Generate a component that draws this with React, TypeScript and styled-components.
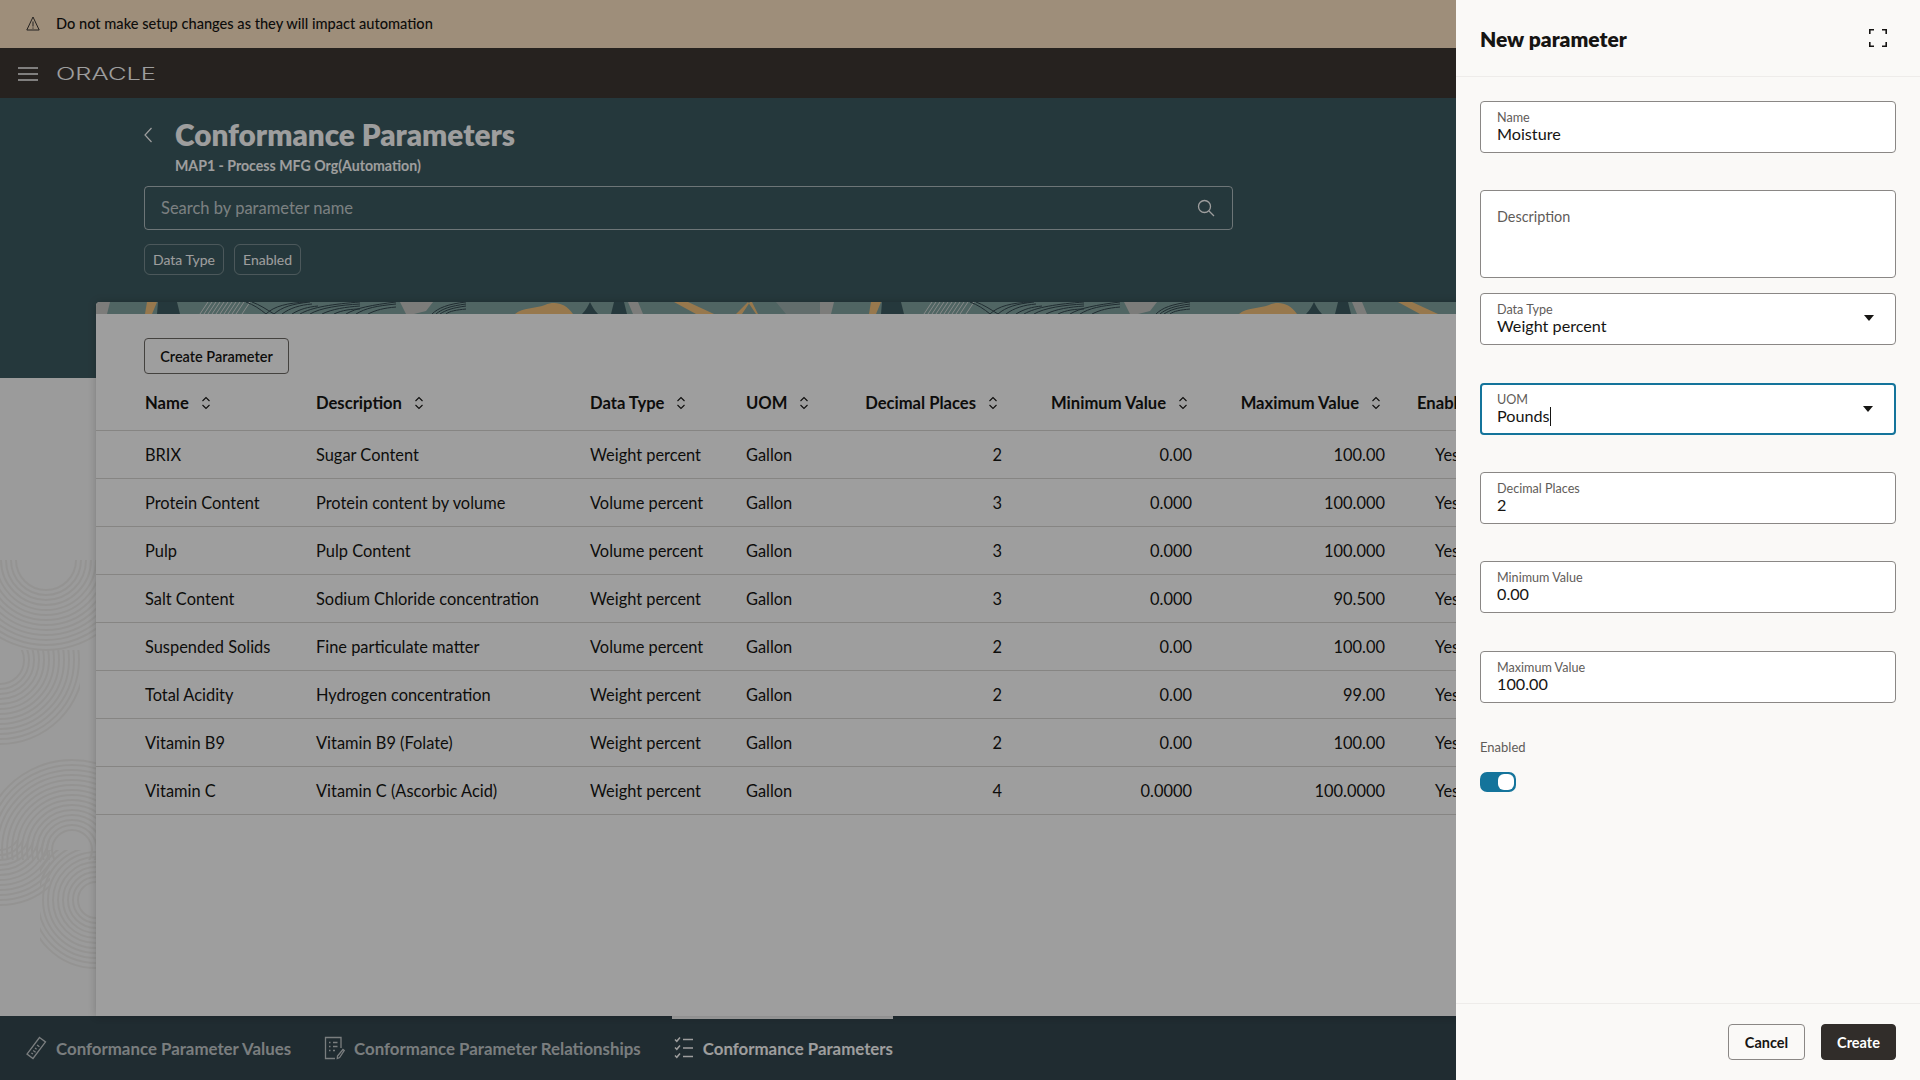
import styled, { createGlobalStyle } from "styled-components";

const GlobalStyle = createGlobalStyle`
  html, body {
    margin: 0;
    padding: 0;
    background: #fff;
  }
  body {
    font-family: "Lato", "Noto Sans", "Liberation Sans", sans-serif;
    color: #161513;
  }
`;

const Page = styled.div`
  position: relative;
  width: 1920px;
  height: 1080px;
  overflow: hidden;
  display: flex;
  flex-direction: column;
  background: #fafafa;
`;

const Banner = styled.div`
  flex: 0 0 48px;
  display: flex;
  align-items: center;
  gap: 16px;
  padding: 0 0 1px 26px;
  box-sizing: border-box;
  background: #ffe5c6;
  font-size: 14.6px;
  font-weight: 500;
  color: #161513;
`;

const NavBar = styled.div`
  box-sizing: border-box;
  flex: 0 0 50px;
  display: flex;
  align-items: center;
  gap: 18px;
  padding: 2px 0 0 18px;
  background: #3e3733;
  color: #fff;
`;

const Main = styled.div`
  position: relative;
  flex: 1;
  min-height: 0;
  display: flex;
  flex-direction: column;
  overflow: hidden;
`;

const Watermark = styled.svg`
  position: absolute;
  left: 0;
  top: 462px;
  width: 96px;
  height: 456px;
`;

const Hero = styled.div`
  flex: 0 0 280px;
  box-sizing: border-box;
  padding: 20px 0 0 144px;
  background: #3d5b61;
  color: #fff;
`;

const TitleRow = styled.div`
  display: flex;
  align-items: center;
  gap: 23px;
  height: 34px;
`;

const Title = styled.h1`
  margin: 0;
  font-size: 29.7px;
  line-height: 34px;
  font-weight: 800;
`;

const Subtitle = styled.div`
  margin: 5px 0 0 31px;
  font-size: 14.15px;
  line-height: 18px;
  font-weight: 700;
`;

const SearchBox = styled.div`
  box-sizing: border-box;
  display: flex;
  align-items: center;
  justify-content: space-between;
  width: 1089px;
  height: 44px;
  margin-top: 11px;
  padding: 0 17px 0 16px;
  border: 1px solid rgba(255, 255, 255, 0.6);
  border-radius: 4px;
  font-size: 16.5px;
  color: rgba(255, 255, 255, 0.72);
`;

const ChipRow = styled.div`
  display: flex;
  gap: 10px;
  margin-top: 14px;
`;

const Chip = styled.div`
  box-sizing: border-box;
  height: 31px;
  display: flex;
  align-items: center;
  padding: 0 8px;
  border: 1px solid rgba(255, 255, 255, 0.32);
  border-radius: 6px;
  font-size: 14px;
`;

const Card = styled.div`
  position: relative;
  flex: 1;
  min-height: 0;
  width: 1728px;
  margin: -76px 0 0 96px;
  background: #fff;
  border-radius: 4px 4px 0 0;
  box-shadow: 0 0 8px rgba(0, 0, 0, 0.2);
  overflow: hidden;
`;

const Stripe = styled.svg`
  display: block;
  width: 100%;
  height: 12px;
`;

const OutlineButton = styled.button`
  box-sizing: border-box;
  display: block;
  width: 145px;
  height: 36px;
  margin: 24px 0 8px 48px;
  background: transparent;
  border: 1px solid #6f6b67;
  border-radius: 4px;
  font-family: inherit;
  font-size: 14.5px;
  font-weight: 600;
  color: #161513;
`;

const Table = styled.table`
  table-layout: fixed;
  border-collapse: collapse;
  width: 1728px;
  color: #161513;
`;

const HeadCell = styled.th<{ $right?: boolean; $first?: boolean }>`
  box-sizing: border-box;
  height: 48px;
  padding: 0 ${(p) => (p.$right ? "20px" : "16px")} 6px ${(p) => (p.$first ? "49px" : "16px")};
  border-bottom: 1px solid #d9d7d4;
  font-size: 16.6px;
  font-weight: 700;
  text-align: ${(p) => (p.$right ? "right" : "left")};
  white-space: nowrap;
`;

const HeadInner = styled.span`
  display: inline-flex;
  align-items: center;
  gap: 12px;
`;

const Cell = styled.td<{ $right?: boolean; $first?: boolean; $pad?: number }>`
  box-sizing: border-box;
  height: 48px;
  padding: 0 16px 0 ${(p) => (p.$first ? "49px" : `${p.$pad ?? 16}px`)};
  border-bottom: 1px solid #d9d7d4;
  font-size: 16.4px;
  text-align: ${(p) => (p.$right ? "right" : "left")};
  white-space: nowrap;
`;

const BottomBar = styled.div`
  flex: 0 0 64px;
  display: flex;
  gap: 31px;
  padding-left: 23px;
  background: #34474f;
`;

const Tab = styled.div<{ $active?: boolean }>`
  display: flex;
  align-items: center;
  gap: 9px;
  padding: 0 0 3px 2px;
  border-top: 3px solid ${(p) => (p.$active ? "#fff" : "transparent")};
  font-size: 16.85px;
  font-weight: 700;
  color: ${(p) => (p.$active ? "#fff" : "rgba(255,255,255,0.72)")};
`;

const Scrim = styled.div`
  position: absolute;
  inset: 0;
  background: rgba(0, 0, 0, 0.38);
`;

const Panel = styled.aside`
  position: absolute;
  top: 0;
  right: 0;
  bottom: 0;
  width: 464px;
  display: flex;
  flex-direction: column;
  background: #faf9f7;
`;

const PanelHeader = styled.div`
  box-sizing: border-box;
  flex: 0 0 77px;
  display: flex;
  align-items: center;
  justify-content: space-between;
  padding: 0 33px 0 24px;
  border-bottom: 1px solid #eeecea;
`;

const PanelTitle = styled.h2`
  margin: 0;
  font-size: 21px;
  font-weight: 800;
  color: #161513;
`;

const PanelBody = styled.div`
  flex: 1;
  padding: 24px 24px 0;
`;

const Field = styled.div<{ $height?: number; $gap?: number; $focus?: boolean }>`
  box-sizing: border-box;
  position: relative;
  height: ${(p) => p.$height ?? 52}px;
  margin-bottom: ${(p) => p.$gap ?? 37}px;
  padding: ${(p) => (p.$focus ? "7px 15px" : "8px 16px")};
  background: #fff;
  border: ${(p) => (p.$focus ? "2px solid #14749b" : "1px solid #8a8785")};
  border-radius: 4px;
`;

const FieldLabel = styled.div<{ $large?: boolean }>`
  font-size: ${(p) => (p.$large ? "14.4px" : "12.6px")};
  line-height: 15px;
  margin-top: ${(p) => (p.$large ? "10px" : "0")};
  color: #5f5c59;
`;

const FieldValue = styled.div`
  font-size: 16.2px;
  line-height: 17px;
  color: #161513;
`;

const Caret = styled.span`
  display: inline-block;
  width: 1px;
  height: 19px;
  vertical-align: -4px;
  background: #161513;
`;

const DropArrow = styled.svg`
  position: absolute;
  top: 21px;
  right: 21px;
  width: 10px;
  height: 6px;
`;

const SwitchLabel = styled.div`
  margin-top: -1px;
  font-size: 13px;
  line-height: 16px;
  color: #5f5c59;
`;

const Switch = styled.div`
  box-sizing: border-box;
  display: flex;
  justify-content: flex-end;
  width: 36px;
  height: 20px;
  margin-top: 17px;
  padding: 2px;
  background: #14749b;
  border-radius: 7px;
`;

const SwitchKnob = styled.div`
  width: 16px;
  height: 16px;
  background: #fff;
  border-radius: 6px;
`;

const PanelFooter = styled.div`
  box-sizing: border-box;
  flex: 0 0 77px;
  display: flex;
  align-items: center;
  justify-content: flex-end;
  gap: 16px;
  padding-right: 24px;
  border-top: 1px solid #eeecea;
`;

const FooterButton = styled.button<{ $primary?: boolean }>`
  box-sizing: border-box;
  height: 36px;
  width: ${(p) => (p.$primary ? "75px" : "77px")};
  padding: 0;
  background: ${(p) => (p.$primary ? "#312d2a" : "transparent")};
  border: 1px solid ${(p) => (p.$primary ? "#312d2a" : "#8a8785")};
  border-radius: 4px;
  font-family: inherit;
  font-size: 14.5px;
  font-weight: 700;
  color: ${(p) => (p.$primary ? "#fff" : "#161513")};
`;

const rows = [
  ["BRIX", "Sugar Content", "Weight percent", "2", "0.00", "100.00"],
  ["Protein Content", "Protein content by volume", "Volume percent", "3", "0.000", "100.000"],
  ["Pulp", "Pulp Content", "Volume percent", "3", "0.000", "100.000"],
  ["Salt Content", "Sodium Chloride concentration", "Weight percent", "3", "0.000", "90.500"],
  ["Suspended Solids", "Fine particulate matter", "Volume percent", "2", "0.00", "100.00"],
  ["Total Acidity", "Hydrogen concentration", "Weight percent", "2", "0.00", "99.00"],
  ["Vitamin B9", "Vitamin B9 (Folate)", "Weight percent", "2", "0.00", "100.00"],
  ["Vitamin C", "Vitamin C (Ascorbic Acid)", "Weight percent", "4", "0.0000", "100.0000"],
];

const columns = [
  { name: "Name", width: 204 },
  { name: "Description", width: 274 },
  { name: "Data Type", width: 156 },
  { name: "UOM", width: 118 },
  { name: "Decimal Places", width: 170, right: true },
  { name: "Minimum Value", width: 190, right: true },
  { name: "Maximum Value", width: 193, right: true },
  { name: "Enabled", width: 423 },
];

const arcTiles = [
  { id: "a", x: 0, y: 0, w: 96, h: 110, cx: 46, cy: 0, from: 30, to: 90 },
  { id: "b", x: 0, y: 90, w: 80, h: 110, cx: 0, cy: 100, from: 24, to: 84 },
  { id: "c", x: 0, y: 190, w: 96, h: 110, cx: 72, cy: 290, from: 20, to: 90 },
  { id: "d", x: 0, y: 280, w: 50, h: 70, cx: 0, cy: 270, from: 20, to: 76 },
  { id: "e", x: 40, y: 290, w: 56, h: 130, cx: 96, cy: 340, from: 18, to: 70 },
];

function SortIcon() {
  return (
    <svg width="10" height="14" viewBox="0 0 10 14" fill="none" stroke="currentColor" strokeWidth="1.1">
      <path d="M1.5 5 5 1.5 8.5 5" />
      <path d="M1.5 9 5 12.5 8.5 9" />
    </svg>
  );
}

function RulerIcon() {
  return (
    <svg width="22" height="24" viewBox="0 0 22 24" fill="none" stroke="currentColor" strokeWidth="1.3">
      <path d="M14.5 1.5 20.5 6 8 22.5 2 18Z" />
      <path d="M12 9l2.4 1.8M10 12l1.6 1.2M8.2 14.5l2.4 1.8M6.4 17l1.5 1.1" />
    </svg>
  );
}

function FormIcon() {
  return (
    <svg width="21" height="24" viewBox="0 0 21 24" fill="none" stroke="currentColor" strokeWidth="1.3">
      <path d="M11 22.5H1.5V1.5H17V12" />
      <path d="M5 6.5h1.5M9 6.5h4.5M5 10.5h1.5M9 10.5h4.5M5 14.5h1.5M9 14.5h2" />
      <path d="M19 13.5l1.2 1-4.6 7-2.3 1 .2-2.5z" />
    </svg>
  );
}

function ChecklistIcon() {
  return (
    <svg width="20" height="24" viewBox="0 0 20 24" fill="none" stroke="currentColor" strokeWidth="1.5">
      <path d="M1 3.5l1.8 1.8L6 1.5M1 11.5l1.8 1.8L6 9.5M1 19.5l1.8 1.8L6 17.5" />
      <path d="M9 3.5h10M9 12h10M9 20.5h10" />
    </svg>
  );
}

function ArcTile({ id, x, y, w, h, cx, cy, from, to }: (typeof arcTiles)[number]) {
  const radii = [];
  for (let r = from; r <= to; r += 5) radii.push(r);
  return (
    <g clipPath={`url(#tile-${id})`}>
      <clipPath id={`tile-${id}`}>
        <rect x={x} y={y} width={w} height={h} />
      </clipPath>
      {radii.map((r) => (
        <circle key={r} cx={cx} cy={cy} r={r} />
      ))}
    </g>
  );
}

export default function App() {
  return (
    <Page>
      <GlobalStyle />
      <Banner>
        <svg width="14" height="15" viewBox="0 0 14 15" fill="none" stroke="#3a3633" strokeWidth="1">
          <path d="M7 1 13.2 14H.8Z" />
          <path d="M7 5.5v5M7 11.5v1.2" />
        </svg>
        Do not make setup changes as they will impact automation
      </Banner>
      <NavBar>
        <svg width="20" height="14" viewBox="0 0 20 14" stroke="#fff" strokeWidth="1.6">
          <path d="M0 1h20M0 7h20M0 13h20" />
        </svg>
        <svg width="101" height="20" viewBox="0 0 101 20">
          <text
            x="0"
            y="16"
            textLength="100"
            lengthAdjust="spacingAndGlyphs"
            fill="#fff"
            fontFamily="Inter"
            fontWeight="300"
            fontSize="17"
          >
            ORACLE
          </text>
        </svg>
      </NavBar>
      <Main>
        <Watermark viewBox="0 0 96 456" fill="none" stroke="#efeeec" strokeWidth="2">
          {arcTiles.map((t) => (
            <ArcTile key={t.id} {...t} />
          ))}
        </Watermark>
        <Hero>
          <TitleRow>
            <svg width="8" height="16" viewBox="0 0 8 16" fill="none" stroke="#fff" strokeWidth="1.2">
              <path d="M7.5 1 1 8l6.5 7" />
            </svg>
            <Title>Conformance Parameters</Title>
          </TitleRow>
          <Subtitle>MAP1 - Process MFG Org(Automation)</Subtitle>
          <SearchBox>
            Search by parameter name
            <svg width="18" height="18" viewBox="0 0 18 18" fill="none" stroke="#fff" strokeWidth="1.3">
              <circle cx="7.5" cy="7.5" r="6" />
              <path d="M12 12l5 5" />
            </svg>
          </SearchBox>
          <ChipRow>
            <Chip>Data Type</Chip>
            <Chip>Enabled</Chip>
          </ChipRow>
        </Hero>
        <Card>
          <Stripe viewBox="0 0 1728 12" preserveAspectRatio="none">
            <defs>
              <pattern id="stripe" width="724" height="12" patternUnits="userSpaceOnUse">
                <rect width="724" height="12" fill="#82a3a0" />
                <path d="M0 0h14l-3 12H0z" fill="#c9c9c6" />
                <path d="M51 0h10l-5 12H49z" fill="#f4c27c" />
                <path d="M62 0h19l3 12H61z" fill="#3d5b61" />
                <g fill="none" stroke="#d9dedc" strokeWidth="1">
                  <path d="M104 12 112 0M108 12l8-12M112 12l8-12M116 12l8-12M120 12l8-12M124 12l8-12M128 12l8-12M132 12l8-12M136 12l8-12M140 12l8-12M146 12l8-12" />
                </g>
                <g fill="none" stroke="#33474f" strokeWidth="1">
                  <path d="M150 0c8 3 14 7 20 12M156 0c8 3 14 7 22 12" />
                  <path d="M170 12c8-8 22-11 40-12M178 12c8-7 18-10 36-12M186 12c8-6 18-9 30-10M196 12c8-5 16-7 26-8M204 12c12-7 34-10 60-12M214 12c10-6 30-9 50-10M226 12c10-5 24-7 38-8M238 12c8-4 18-5 26-5M250 12c10-6 26-9 50-12M260 12c10-6 20-8 40-10M272 12c8-4 16-6 28-7" />
                  <path d="M336 12c6-6 16-10 34-12M340 12c6-5 14-8 30-10M344 12c6-4 12-6 26-8M350 12c4-3 10-4 20-5" />
                </g>
                <path d="M304 0h33l-7 9-12 3h-8z" fill="#c9c9c6" />
                <path d="M419 12c8-7 20-5 30-9 10-4 20-2 28 9z" fill="#f4c27c" />
                <path d="M486 12c4-4 6-8 8-12 2 4 4 8 8 12z" fill="#3d5b61" />
                <path d="M518 0h10l3 12h-16z" fill="#3d5b61" />
                <path d="M532 0h10l5 12h-10z" fill="#c9c9c6" />
                <path d="M578 0h14l26 12h-18z" fill="#f4c27c" />
                <path d="M640 12 652 0h2l-8 12zM652 0l8 12h2L656 0z" fill="#f4c27c" />
                <path d="M680 0h44v12h-34z" fill="#9fb0af" />
              </pattern>
            </defs>
            <rect width="1728" height="12" fill="url(#stripe)" />
          </Stripe>
          <OutlineButton>Create Parameter</OutlineButton>
          <Table>
            <colgroup>
              {columns.map((c) => (
                <col key={c.name} style={{ width: c.width }} />
              ))}
            </colgroup>
            <thead>
              <tr>
                {columns.map((c, i) => (
                  <HeadCell key={c.name} $right={c.right} $first={i === 0}>
                    <HeadInner>
                      {c.name}
                      <SortIcon />
                    </HeadInner>
                  </HeadCell>
                ))}
              </tr>
            </thead>
            <tbody>
              {rows.map((r) => (
                <tr key={r[0]}>
                  <Cell $first>{r[0]}</Cell>
                  <Cell>{r[1]}</Cell>
                  <Cell>{r[2]}</Cell>
                  <Cell>Gallon</Cell>
                  <Cell $right>{r[3]}</Cell>
                  <Cell $right>{r[4]}</Cell>
                  <Cell $right>{r[5]}</Cell>
                  <Cell $pad={34}>Yes</Cell>
                </tr>
              ))}
            </tbody>
          </Table>
        </Card>
        <BottomBar>
          <Tab>
            <RulerIcon />
            Conformance Parameter Values
          </Tab>
          <Tab>
            <FormIcon />
            Conformance Parameter Relationships
          </Tab>
          <Tab $active>
            <ChecklistIcon />
            Conformance Parameters
          </Tab>
        </BottomBar>
      </Main>
      <Scrim />
      <Panel>
        <PanelHeader>
          <PanelTitle>New parameter</PanelTitle>
          <svg width="18" height="18" viewBox="0 0 18 18" fill="none" stroke="#161513" strokeWidth="1.6">
            <path d="M.8 5V.8H5M13 .8h4.2V5M17.2 13v4.2H13M5 17.2H.8V13" />
          </svg>
        </PanelHeader>
        <PanelBody>
          <Field>
            <FieldLabel>Name</FieldLabel>
            <FieldValue>Moisture</FieldValue>
          </Field>
          <Field $height={88} $gap={15}>
            <FieldLabel $large>Description</FieldLabel>
          </Field>
          <Field $gap={38}>
            <FieldLabel>Data Type</FieldLabel>
            <FieldValue>Weight percent</FieldValue>
            <DropArrow viewBox="0 0 10 6" fill="#161513">
              <path d="M0 0h10L5 6z" />
            </DropArrow>
          </Field>
          <Field $focus>
            <FieldLabel>UOM</FieldLabel>
            <FieldValue>
              Pounds
              <Caret />
            </FieldValue>
            <DropArrow viewBox="0 0 10 6" fill="#161513">
              <path d="M0 0h10L5 6z" />
            </DropArrow>
          </Field>
          <Field>
            <FieldLabel>Decimal Places</FieldLabel>
            <FieldValue>2</FieldValue>
          </Field>
          <Field $gap={38}>
            <FieldLabel>Minimum Value</FieldLabel>
            <FieldValue>0.00</FieldValue>
          </Field>
          <Field>
            <FieldLabel>Maximum Value</FieldLabel>
            <FieldValue>100.00</FieldValue>
          </Field>
          <SwitchLabel>Enabled</SwitchLabel>
          <Switch>
            <SwitchKnob />
          </Switch>
        </PanelBody>
        <PanelFooter>
          <FooterButton>Cancel</FooterButton>
          <FooterButton $primary>Create</FooterButton>
        </PanelFooter>
      </Panel>
    </Page>
  );
}
